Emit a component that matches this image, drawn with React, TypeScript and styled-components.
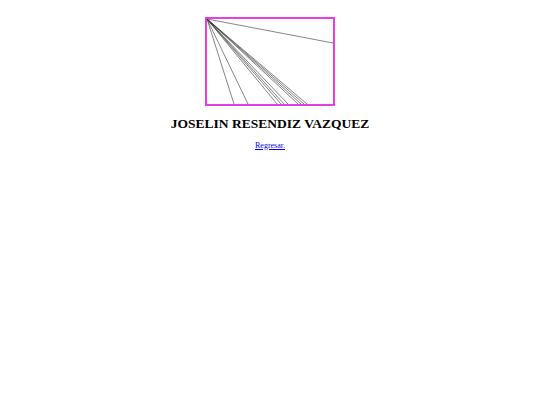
import React from "react";
import styled, { createGlobalStyle } from "styled-components";

const GlobalStyle = createGlobalStyle`
  body {
    margin: 0;
    background: #ffffff;
    font-family: "Liberation Serif", "Times New Roman", serif;
  }
`;

const W = 126;
const H = 85;

// endpoints of the lines fanning out from the top-left corner
const bottomEnds = [27, 41, 70, 74, 77, 81, 91, 94, 97, 100];

const Page = styled.div`
  display: flex;
  flex-direction: column;
  align-items: center;
  padding-top: 17px;
`;

const Canvas = styled.svg`
  display: block;
  border: 2px solid #e63de6;
  background: #ffffff;
`;

const Title = styled.h1`
  margin: 10px 0 0;
  font-size: 13.5px;
  font-weight: bold;
  color: #000000;
  line-height: 1.15;
`;

const BackLink = styled.a`
  margin-top: 9px;
  font-size: 8px;
  color: #0000ee;
  text-decoration: underline;
`;

const App = () => (
  <>
    <GlobalStyle />
    <Page>
      <Canvas width={W} height={H} viewBox={`0 0 ${W} ${H}`}>
        <line x1={0} y1={0} x2={W} y2={24} stroke="#333" strokeWidth={0.6} />
        {bottomEnds.map((x) => (
          <line key={x} x1={0} y1={0} x2={x} y2={H} stroke="#333" strokeWidth={0.6} />
        ))}
      </Canvas>
      <Title>JOSELIN RESENDIZ VAZQUEZ</Title>
      <BackLink href="#">Regresar.</BackLink>
    </Page>
  </>
);

export default App;
